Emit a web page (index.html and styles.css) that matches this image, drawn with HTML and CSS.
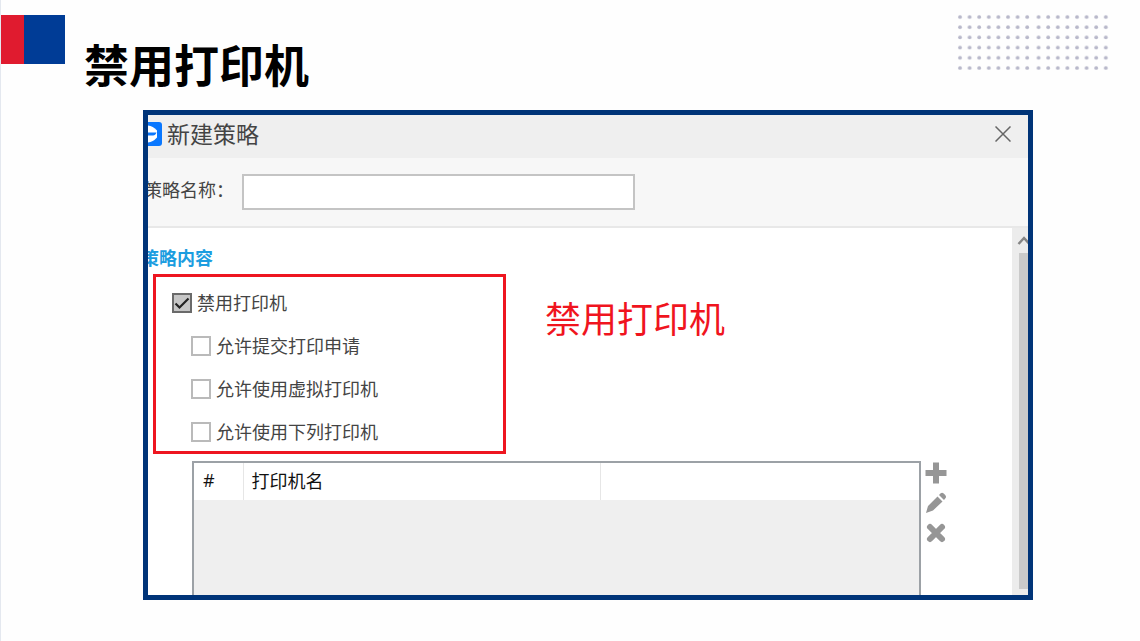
FILE: index.html
```html
<!DOCTYPE html>
<html lang="zh-CN">
<head>
    <meta charset="UTF-8">
    <meta name="viewport" content="width=device-width, initial-scale=1.0">
    <title>禁用打印机</title>
    <link rel="stylesheet" href="styles.css">
</head>
<body>
    <header class="slide-header">
        <div class="logo"></div>
        <h1>禁用打印机</h1>
        <svg class="dots" width="154" height="56" viewBox="0 0 154 56" aria-hidden="true">
            <defs>
                <pattern id="dot" width="9.6" height="10.2" patternUnits="userSpaceOnUse">
                    <circle cx="3" cy="3" r="1.9" fill="#b8b8ca"/>
                </pattern>
            </defs>
            <rect width="76" height="56" fill="url(#dot)"/>
            <rect width="76" height="56" fill="url(#dot)" transform="translate(78.6 0)"/>
        </svg>
    </header>

    <main class="frame">
        <div class="window">
            <!-- Title bar -->
            <div class="titlebar">
                <svg class="app-icon" width="24" height="24" viewBox="0 0 24 24" aria-hidden="true">
                    <rect width="24" height="24" rx="3" fill="#0a78ff"/>
                    <path d="M10 3.500q5 .5 9 5v7q-4 4.500-9 5-5-.5-9-5v-7q4-4.500 9-5z" fill="#fff"/>
                    <path d="M4 10.500h14.500q-1 3-3.500 3H4z" fill="#0a78ff"/>
                </svg>
                <h2>新建策略</h2>
                <button class="icon-button close" type="button" aria-label="关闭">
                    <svg width="16" height="16" viewBox="0 0 16 16">
                        <path d="M.5.5l15 15M15.500.5l-15 15" fill="none" stroke="#666" stroke-width="1.500"/>
                    </svg>
                </button>
            </div>

            <!-- Policy name -->
            <div class="name-row">
                <label for="policyName">策略名称：</label>
                <input id="policyName" type="text">
            </div>

            <!-- Policy content -->
            <div class="body">
                <div class="content">
                    <h3>策略内容</h3>

                    <div class="options-row">
                        <div class="options">
                            <label class="option"><input type="checkbox" checked><span>禁用打印机</span></label>
                            <label class="option sub"><input type="checkbox"><span>允许提交打印申请</span></label>
                            <label class="option sub"><input type="checkbox"><span>允许使用虚拟打印机</span></label>
                            <label class="option sub"><input type="checkbox"><span>允许使用下列打印机</span></label>
                        </div>
                        <p class="note">禁用打印机</p>
                    </div>

                    <div class="printers">
                        <div class="table-box">
                            <table>
                                <thead>
                                    <tr>
                                        <th class="col-index">#</th>
                                        <th class="col-name">打印机名</th>
                                        <th></th>
                                    </tr>
                                </thead>
                            </table>
                        </div>
                        <div class="tools">
                            <button class="icon-button" type="button" aria-label="添加">
                                <svg width="22" height="22" viewBox="0 0 22 22">
                                    <path d="M8 0.500h6v7.500h7.500v6H14v7.500H8V14H.5V8H8z" fill="#969696"/>
                                </svg>
                            </button>
                            <button class="icon-button" type="button" aria-label="编辑">
                                <svg width="22" height="22" viewBox="0 0 22 22">
                                    <path d="M1 21l2-7L12.500 4.500l5 5L8 18.500zM14 3l1.700-1.700q1.500-1 3 .3l1.500 1.500q1.400 1.500.4 3L19 7.900z" fill="#969696"/>
                                </svg>
                            </button>
                            <button class="icon-button" type="button" aria-label="删除">
                                <svg width="22" height="22" viewBox="0 0 22 22">
                                    <path d="M5 5l12 12M17 5L5 17" fill="none" stroke="#969696" stroke-width="6" stroke-linecap="round"/>
                                </svg>
                            </button>
                        </div>
                    </div>
                </div>

                <div class="scrollbar">
                    <svg width="14" height="9" viewBox="0 0 14 9" aria-hidden="true">
                        <path d="M1.500 8L7 2l5.500 6" fill="none" stroke="#858585" stroke-width="2.500"/>
                    </svg>
                    <div class="thumb"></div>
                </div>
            </div>
        </div>
    </main>
</body>
</html>
```

FILE: styles.css
```css
* {
    box-sizing: border-box;
    margin: 0;
    padding: 0;
}

body {
    min-height: 100vh;
    font-family: "Noto Sans CJK SC", sans-serif;
    font-size: 18px;
    line-height: 20px;
    color: #444;
    background-color: #fefefe;
    border-left: 1px solid #e4e8ef;
}

/* Slide header */
.slide-header {
    display: flex;
    align-items: flex-start;
    height: 110px;
    padding-right: 29px;
}

.logo {
    width: 64px;
    height: 49px;
    margin-top: 15px;
    background: linear-gradient(to right, #e01b2f 23px, #003c96 23px);
}

h1 {
    margin: 34px auto 0 19px;
    font-size: 45px;
    line-height: 60px;
    font-weight: 700;
    color: #000;
}

.dots {
    margin-top: 14px;
}

/* Framed window, its side edges run under the frame */
.frame {
    margin: 0 107px 40px 142px;
    border: 5px solid #003478;
    background-color: #fff;
    overflow: hidden;
}

.window {
    margin: 0 -8px 0 -10px;
}

.icon-button {
    display: flex;
    border: none;
    background: none;
    cursor: pointer;
}

.titlebar {
    display: flex;
    align-items: center;
    gap: 5px;
    height: 43px;
    padding-right: 25px;
    padding-bottom: 5px;
    background-color: #efefef;
}

h2 {
    flex: 1;
    padding-bottom: 2px;
    font-size: 23px;
    line-height: 28px;
    font-weight: 400;
}

.name-row {
    display: flex;
    align-items: center;
    height: 70px;
    padding-left: 6px;
    background-color: #f7f7f7;
    border-bottom: 2px solid #e8e8e8;
}

.name-row label {
    width: 98px;
    padding-bottom: 6px;
}

.name-row input {
    flex: 0 1 393px;
    min-width: 0;
    height: 36px;
    padding: 0 8px;
    border: 2px solid #c4c4c4;
    background-color: #fff;
    font: inherit;
}

.body {
    display: flex;
}

.content {
    flex: 1;
    padding-top: 19px;
}

h3 {
    padding-left: 3px;
    font-size: 18px;
    line-height: 20px;
    font-weight: 700;
    color: #1c9de0;
}

/* Options */
.options-row {
    display: flex;
    gap: 39px;
    margin: 7px 0 7px 15px;
}

.options {
    display: flex;
    flex-direction: column;
    gap: 23px;
    flex: 0 1 353px;
    padding: 16px 16px 9px;
    border: 3px solid #ee1620;
}

.option {
    display: flex;
    align-items: center;
    gap: 5px;
    height: 20px;
}

.option span {
    padding-bottom: 2px;
}

.option.sub {
    margin-left: 19px;
}

.option input {
    appearance: none;
    width: 20px;
    height: 20px;
    border: 2px solid #bababa;
    background-color: #fff;
}

.option input:checked {
    border-color: #6a6a6a;
    background: #c6c6c6 url("data:image/svg+xml,%3Csvg xmlns='http://www.w3.org/2000/svg' viewBox='0 0 16 16'%3E%3Cpath d='M1.500 8.500l4 4L14.500 3.500' fill='none' stroke='%23222' stroke-width='2.200'/%3E%3C/svg%3E");
}

.note {
    padding-top: 17px;
    font-size: 36px;
    line-height: 52px;
    color: #f0141e;
}

/* Printer list */
.printers {
    display: flex;
    gap: 4px;
    margin: 0 65px 0 54px;
}

.table-box {
    flex: 1;
    height: 134px;
    border: 2px solid #9ca1a6;
    border-bottom: none;
    background-color: #efefef;
}

table {
    width: 100%;
    table-layout: fixed;
    border-collapse: collapse;
    background-color: #fff;
    color: #111;
}

th {
    height: 37px;
    padding: 0 0 3px 8px;
    border-right: 1px solid #e6e6e6;
    font-weight: 400;
    text-align: left;
}

th:last-child {
    border-right: none;
}

.col-index {
    width: 49px;
    padding-left: 9px;
    font-family: "Open Sans", sans-serif;
}

.col-name {
    width: 357px;
}

.tools {
    display: flex;
    flex-direction: column;
    gap: 8px;
    padding-top: 1px;
}

/* Scrollbar */
.scrollbar {
    display: flex;
    flex-direction: column;
    gap: 8px;
    width: 24px;
    padding: 8px 0 6px 5px;
    background-color: #ececec;
}

.thumb {
    flex: 1;
    width: 14px;
    margin-left: 2px;
    background-color: #cacaca;
}
```
